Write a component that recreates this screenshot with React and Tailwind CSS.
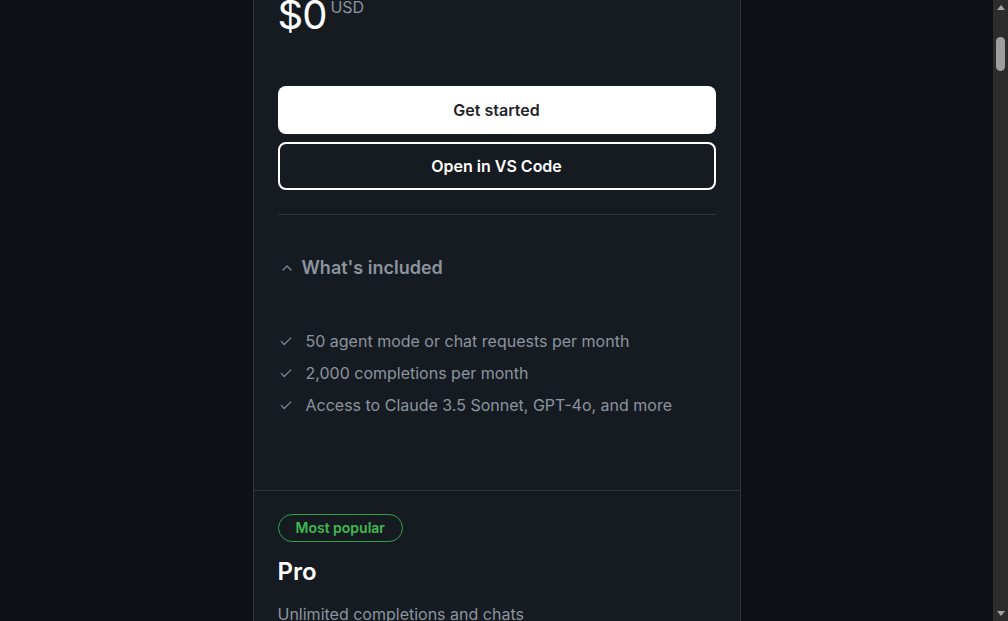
import React from 'react';

const features = [
    '50 agent mode or chat requests per month',
    '2,000 completions per month',
    'Access to Claude 3.5 Sonnet, GPT-4o, and more',
];

function Check() {
    return (
        <svg width="14" height="14" viewBox="0 0 16 16" fill="none" className="shrink-0">
            <path d="M2.5 8.5l3.5 3.5 7.5-7.5" stroke="#7d8590" strokeWidth="1.4" strokeLinecap="round" strokeLinejoin="round" />
        </svg>
    );
}

function ChevronUp() {
    return (
        <svg width="12" height="12" viewBox="0 0 12 12" fill="none" className="shrink-0">
            <path d="M2 8l4-4 4 4" stroke="#7d8590" strokeWidth="1.4" strokeLinecap="round" strokeLinejoin="round" />
        </svg>
    );
}

// fake browser scrollbar, the page is scrolled down in the shot
function Scrollbar() {
    return (
        <div className="w-[15px] shrink-0 bg-[#2c2c2c] flex flex-col items-center justify-between pt-[5px] pb-[5px]">
            <div className="flex flex-col items-center">
                <div className="w-0 h-0 border-l-[4px] border-r-[4px] border-b-[5px] border-l-transparent border-r-transparent border-b-[#a3a3a3]" />
                <div className="mt-[27px] w-[9px] h-[34px] rounded-full bg-[#9e9e9e]" />
            </div>
            <div className="w-0 h-0 border-l-[4px] border-r-[4px] border-t-[5px] border-l-transparent border-r-transparent border-t-[#a3a3a3]" />
        </div>
    );
}

export default function App() {
    return (
        <div className="flex h-[621px] w-full overflow-hidden bg-[#0d1117]" style={{ fontFamily: 'Inter, "Noto Sans", sans-serif' }}>
            <div className="flex-1 flex justify-center">
                <div className="w-[488px] border-x border-[#30363d] bg-[#161b22] flex flex-col">
                    {/* Free tier */}
                    <div className="px-6 pb-[73px]">
                        <div className="flex items-start mt-[-5px]">
                            <span className="text-[40px] leading-[40px] text-white tracking-tight">$0</span>
                            <span className="ml-1 text-base leading-4 text-[#8b949e] mt-[4px]">USD</span>
                        </div>

                        <button className="mt-[51px] w-full h-12 rounded-lg bg-white text-[#1f2328] text-base font-semibold">
                            Get started
                        </button>
                        <button className="mt-2 w-full h-12 rounded-lg border-2 border-white text-white text-base font-semibold">
                            Open in VS Code
                        </button>

                        <div className="mt-6 border-t border-[#30363d]" />

                        <div className="mt-[39px] h-7 flex items-center gap-[9px] pl-[3px]">
                            <ChevronUp />
                            <span className="text-lg font-semibold text-[#8b949e]">What's included</span>
                        </div>

                        <ul className="mt-[47px] flex flex-col gap-2">
                            {features.map((f) => (
                                <li key={f} className="flex items-center gap-[13px] h-6 pl-[1px]">
                                    <Check />
                                    <span className="text-base text-[#8b949e]">{f}</span>
                                </li>
                            ))}
                        </ul>
                    </div>

                    {/* Pro tier */}
                    <div className="border-t border-[#30363d] px-6 pt-[23px]">
                        <span className="inline-flex items-center h-7 px-[17px] rounded-full border border-[#2ea043] text-sm font-semibold text-[#3fb950]">
                            Most popular
                        </span>
                        <div className="mt-[14px] text-2xl leading-8 font-semibold text-white">Pro</div>
                        <div className="mt-[14px] text-base leading-6 text-[#8b949e]">Unlimited completions and chats</div>
                    </div>
                </div>
            </div>
            <Scrollbar />
        </div>
    );
}
